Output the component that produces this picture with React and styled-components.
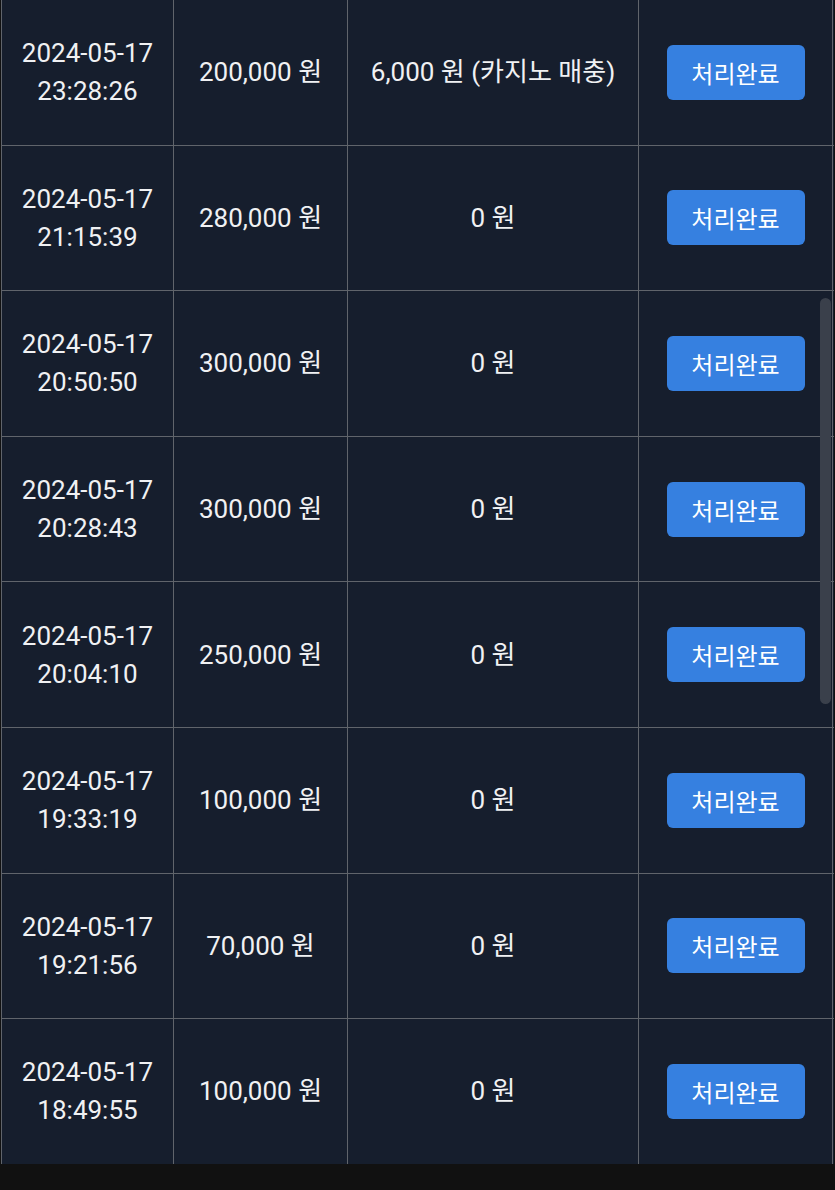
import React from "react";
import styled, { createGlobalStyle } from "styled-components";

const rows = [
  { date: "2024-05-17", time: "23:28:26", amount: "200,000 원", fee: "6,000 원 (카지노 매충)" },
  { date: "2024-05-17", time: "21:15:39", amount: "280,000 원", fee: "0 원" },
  { date: "2024-05-17", time: "20:50:50", amount: "300,000 원", fee: "0 원" },
  { date: "2024-05-17", time: "20:28:43", amount: "300,000 원", fee: "0 원" },
  { date: "2024-05-17", time: "20:04:10", amount: "250,000 원", fee: "0 원" },
  { date: "2024-05-17", time: "19:33:19", amount: "100,000 원", fee: "0 원" },
  { date: "2024-05-17", time: "19:21:56", amount: "70,000 원", fee: "0 원" },
  { date: "2024-05-17", time: "18:49:55", amount: "100,000 원", fee: "0 원" },
];

const GlobalStyle = createGlobalStyle`
  html, body {
    margin: 0;
    padding: 0;
    background: #111111;
    height: 1190px;
    overflow: hidden;
  }
`;

const Page = styled.div`
  width: 835px;
  height: 1190px;
  background: #111111;
  font-family: Roboto, "Noto Sans CJK KR", sans-serif;
`;

const Table = styled.div`
  position: relative;
  margin: -1px 0 0 1px;
  width: 832px;
  background: #161e2d;
  border-left: 1px solid #60646b;
`;

const Row = styled.div`
  display: grid;
  grid-template-columns: 172px 174px 291px 194px;
  height: 145.6px;
  box-sizing: border-box;
  border-top: 1px solid #60646b;
  &:last-of-type {
    border-bottom: 1px solid #60646b;
  }
`;

const Cell = styled.div`
  display: flex;
  flex-direction: column;
  align-items: center;
  justify-content: center;
  border-right: 1px solid #60646b;
  color: #f0f1f3;
  font-size: 26px;
  line-height: 38px;
  text-align: center;
  white-space: nowrap;
`;

const DoneButton = styled.button`
  width: 138px;
  height: 55px;
  border: none;
  border-radius: 6px;
  background: #3680e0;
  color: #ffffff;
  font-family: "Noto Sans CJK KR", sans-serif;
  font-size: 24px;
  padding: 0;
  cursor: pointer;
`;

const ScrollThumb = styled.div`
  position: absolute;
  top: 299px;
  right: 3px;
  width: 11px;
  height: 406px;
  border-radius: 6px;
  background: #3a404b;
`;

export default function App() {
  return (
    <Page>
      <GlobalStyle />
      <Table>
        {rows.map((r, i) => (
          <Row key={i}>
            <Cell>
              <span>{r.date}</span>
              <span>{r.time}</span>
            </Cell>
            <Cell>{r.amount}</Cell>
            <Cell>{r.fee}</Cell>
            <Cell>
              <DoneButton>처리완료</DoneButton>
            </Cell>
          </Row>
        ))}
        <ScrollThumb />
      </Table>
    </Page>
  );
}
